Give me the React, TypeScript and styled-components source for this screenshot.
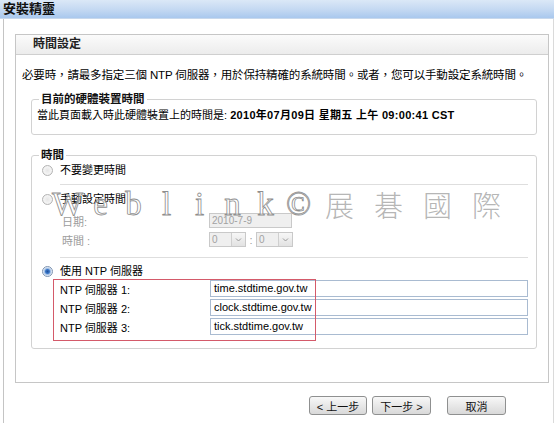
import React from 'react';
import styled, { createGlobalStyle } from 'styled-components';

const GlobalStyle = createGlobalStyle`
  html, body {
    margin: 0;
    padding: 0;
    background: #ffffff;
  }
  body {
    font-family: "Liberation Sans", "Noto Sans CJK TC", sans-serif;
    font-size: 11px;
    color: #000000;
  }
`;

const Window = styled.div`
  position: relative;
  width: 554px;
  height: 423px;
  overflow: hidden;
  background: #ffffff;
`;

const TitleBar = styled.div`
  height: 18px;
  line-height: 18px;
  padding-left: 3px;
  font-size: 13px;
  font-weight: bold;
  color: #111;
  background: linear-gradient(#dbe8f7, #c3d8f2 55%, #a9c8ee);
  border-bottom: 1px solid #c8d8ec;
`;

const Body = styled.div`
  margin-left: 3px;
  height: 404px;
  padding-top: 15px;
  box-sizing: border-box;
  border-left: 1px solid #c4c4c4;
  border-right: 1px solid #dadada;
`;

const Panel = styled.div`
  margin-left: 11px;
  width: 534px;
  height: 349px;
  box-sizing: border-box;
  border: 1px solid #c6c6c6;
`;

const PanelHeader = styled.div`
  height: 19px;
  line-height: 19px;
  padding-left: 17px;
  font-size: 12px;
  font-weight: bold;
  color: #222;
  background: linear-gradient(#fbfbfb, #ececec);
  border-bottom: 1px solid #cfcfcf;
`;

const Intro = styled.p`
  margin: 12px 0 0 6px;
  line-height: 16px;
  font-size: 11.5px;
  letter-spacing: -0.15px;
  white-space: nowrap;
`;

const Group = styled.fieldset<{ $gap: number }>`
  margin: ${(p) => p.$gap}px 11px 0 15px;
  padding: 0;
  border: 1px solid #d2d2d2;
  border-radius: 3px;
`;

const Legend = styled.legend`
  margin-left: 7px;
  padding: 0 2px;
  line-height: 14px;
  font-size: 11.5px;
  font-weight: bold;
  color: #111;
`;

const ClockLine = styled.div`
  padding: 2px 0 12px 5px;
  line-height: 14px;

  b {
    font-weight: bold;
    letter-spacing: 0.3px;
  }
`;

const Options = styled.div`
  display: flex;
  flex-direction: column;
  padding: 0 8px 13px 10px;
`;

const RadioRow = styled.label`
  display: flex;
  align-items: center;
  gap: 7px;
  height: 16px;
  line-height: 16px;
`;

const RadioDot = styled.span<{ $checked?: boolean }>`
  width: 11px;
  height: 11px;
  box-sizing: border-box;
  border-radius: 50%;
  border: 1px solid ${(p) => (p.$checked ? '#7d93b0' : '#b4b4b4')};
  background: ${(p) =>
    p.$checked
      ? 'radial-gradient(circle, #1f4f9c 0, #3a78c8 2px, #9fbde4 3px, #eef3f9 4.5px)'
      : 'radial-gradient(circle, #e6e6e6 0, #f4f4f4 60%, #dcdcdc)'};
`;

const Divider = styled.hr<{ $top: number; $bottom: number }>`
  margin: ${(p) => p.$top}px 0 ${(p) => p.$bottom}px 18px;
  border: 0;
  border-top: 1px solid #dedede;
`;

const FieldRow = styled.div<{ $top: number }>`
  display: flex;
  align-items: center;
  margin-top: ${(p) => p.$top}px;
  height: 15px;
`;

const DimLabel = styled.span`
  width: 147px;
  padding-left: 20px;
  color: #9c9c9c;
`;

const DimInput = styled.div<{ $width: number }>`
  width: ${(p) => p.$width}px;
  height: 15px;
  box-sizing: border-box;
  display: flex;
  align-items: center;
  justify-content: space-between;
  padding-left: 2px;
  border: 1px solid #c9c9c9;
  background: #efefef;
  color: #a2a2a2;
  font-size: 10px;
`;

const DropButton = styled.span`
  width: 13px;
  height: 13px;
  display: flex;
  align-items: center;
  justify-content: center;
  border-left: 1px solid #cfcfcf;
  background: linear-gradient(#f7f7f7, #e2e2e2);
`;

const Colon = styled.span`
  width: 10px;
  text-align: center;
  color: #9c9c9c;
`;

const NtpBlock = styled.div`
  position: relative;
  margin-top: 1px;
  display: flex;
  flex-direction: column;
  gap: 2px;
`;

const NtpRow = styled.div`
  display: flex;
  align-items: center;
  height: 17px;
`;

const NtpLabel = styled.span`
  width: 168px;
  padding-left: 18px;
  box-sizing: border-box;
`;

const NtpInput = styled.div`
  flex: 1;
  height: 17px;
  box-sizing: border-box;
  padding-left: 3px;
  line-height: 15px;
  border: 1px solid #a9bbd1;
  background: #ffffff;
  font-size: 11px;
`;

const Highlight = styled.div`
  position: absolute;
  left: 11px;
  top: -1px;
  width: 263px;
  height: 62px;
  box-sizing: border-box;
  border: 1px solid #d45a6a;
  pointer-events: none;
`;

const ButtonBar = styled.div`
  display: flex;
  justify-content: flex-end;
  margin-top: 13px;
  padding-right: 47px;
`;

const Button = styled.button<{ $width: number; $gap: number }>`
  width: ${(p) => p.$width}px;
  height: 19px;
  margin-left: ${(p) => p.$gap}px;
  padding: 0;
  font-family: "Liberation Sans", "Noto Sans CJK TC", sans-serif;
  font-size: 11px;
  color: #111;
  border: 1px solid #8f9090;
  border-radius: 3px;
  background: linear-gradient(#f8f8f8, #e8e8e8 50%, #d9d9d9);
`;

// faint "Weblink © 展碁國際" stamp laid over the form
const Stamp = styled.div`
  position: absolute;
  left: 51px;
  top: 186px;
  display: flex;
  pointer-events: none;
`;

const StampChar = styled.span<{ $wide?: boolean }>`
  width: ${(p) => (p.$wide ? 49 : 33)}px;
  text-align: center;
  line-height: 36px;
  font-family: ${(p) => (p.$wide ? '"Noto Sans CJK TC"' : '"Liberation Serif"')}, serif;
  font-size: ${(p) => (p.$wide ? 29 : 33)}px;
  color: ${(p) => (p.$wide ? 'rgba(150,150,150,0.7)' : 'rgba(255,255,255,0.4)')};
  -webkit-text-stroke: ${(p) => (p.$wide ? '0' : '0.8px #8e8e8e')};
  font-weight: 300;
`;

const stampText = ['W', 'e', 'b', 'l', 'i', 'n', 'k', '©', '展', '碁', '國', '際'];

const servers = ['time.stdtime.gov.tw', 'clock.stdtime.gov.tw', 'tick.stdtime.gov.tw'];

const Arrow = () => (
  <svg width="7" height="5" viewBox="0 0 7 5">
    <path d="M1 1.5 L3.5 4 L6 1.5" fill="none" stroke="#9a9a9a" strokeWidth="1" />
  </svg>
);

export default function App() {
  return (
    <Window>
      <GlobalStyle />
      <TitleBar>安裝精靈</TitleBar>
      <Body>
        <Panel>
          <PanelHeader>時間設定</PanelHeader>
          <Intro>必要時，請最多指定三個 NTP 伺服器，用於保持精確的系統時間。或者，您可以手動設定系統時間。</Intro>

          <Group $gap={9}>
            <Legend>目前的硬體裝置時間</Legend>
            <ClockLine>
              當此頁面載入時此硬體裝置上的時間是: <b>2010年07月09日 星期五 上午 09:00:41 CST</b>
            </ClockLine>
          </Group>

          <Group $gap={13}>
            <Legend>時間</Legend>
            <Options>
              <RadioRow>
                <RadioDot />
                不要變更時間
              </RadioRow>
              <Divider $top={6} $bottom={6} />
              <RadioRow>
                <RadioDot />
                手動設定時間
              </RadioRow>
              <FieldRow $top={6}>
                <DimLabel>日期:</DimLabel>
                <DimInput $width={83}>2010-7-9</DimInput>
              </FieldRow>
              <FieldRow $top={4}>
                <DimLabel>時間 :</DimLabel>
                <DimInput $width={37}>
                  0
                  <DropButton>
                    <Arrow />
                  </DropButton>
                </DimInput>
                <Colon>:</Colon>
                <DimInput $width={37}>
                  0
                  <DropButton>
                    <Arrow />
                  </DropButton>
                </DimInput>
              </FieldRow>
              <Divider $top={10} $bottom={5} />
              <RadioRow>
                <RadioDot $checked />
                使用 NTP 伺服器
              </RadioRow>
              <NtpBlock>
                {servers.map((s, i) => (
                  <NtpRow key={s}>
                    <NtpLabel>NTP 伺服器 {i + 1}:</NtpLabel>
                    <NtpInput>{s}</NtpInput>
                  </NtpRow>
                ))}
                <Highlight />
              </NtpBlock>
            </Options>
          </Group>
        </Panel>

        <ButtonBar>
          <Button $width={58} $gap={0}>&lt; 上一步</Button>
          <Button $width={59} $gap={5}>下一步 &gt;</Button>
          <Button $width={59} $gap={16}>取消</Button>
        </ButtonBar>
      </Body>

      <Stamp>
        {stampText.map((c) => (
          <StampChar key={c} $wide={/[\u4e00-\u9fff]/.test(c)}>
            {c}
          </StampChar>
        ))}
      </Stamp>
    </Window>
  );
}
